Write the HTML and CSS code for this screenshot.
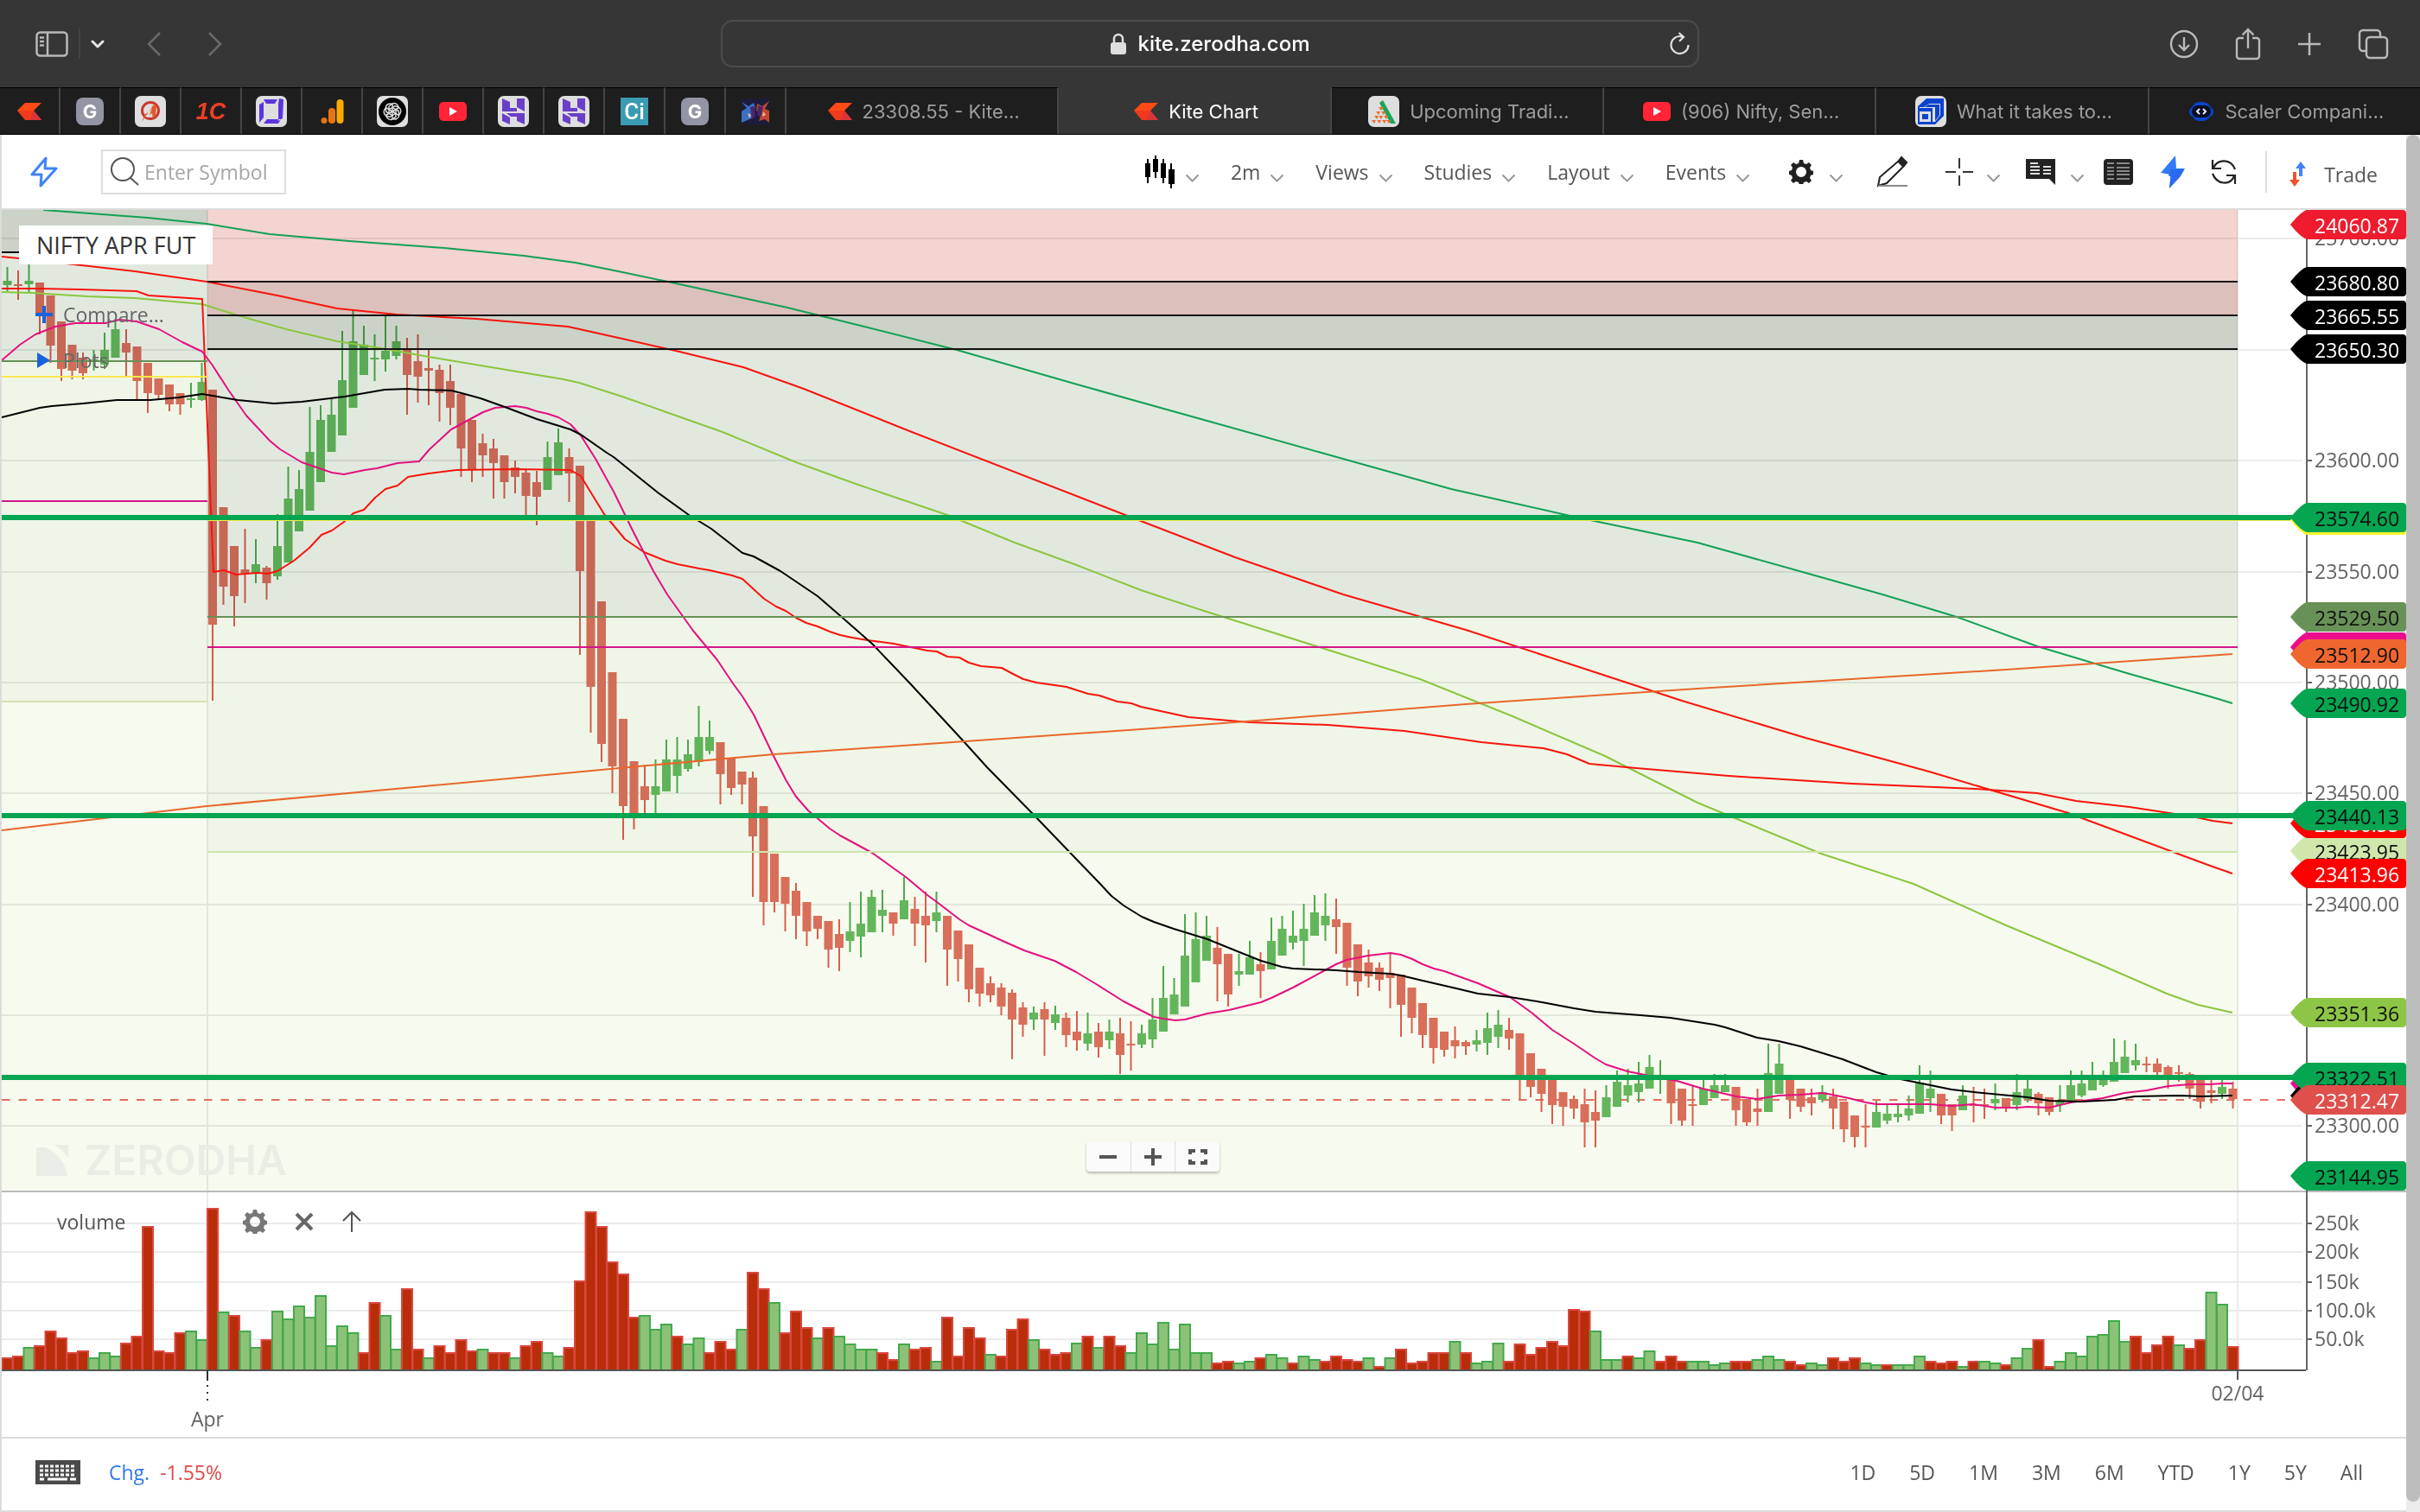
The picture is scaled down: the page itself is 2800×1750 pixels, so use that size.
FILE: index.html
```html
<!DOCTYPE html>
<html lang="en">
<head>
  <meta charset="UTF-8">
  <meta name="viewport" content="width=device-width, initial-scale=1">
  <title>Kite Chart</title>
  <link rel="stylesheet" href="styles.css">
</head>
<body>

<svg class="defs" width="0" height="0" aria-hidden="true">
  <symbol id="chev" viewBox="0 0 17 10"><path d="M1.5 1.5l7 7 7-7" fill="none" stroke="#999" stroke-width="2"/></symbol>
  <symbol id="kite" viewBox="0 0 28 20"><path d="M9 0h19l-9 9H0z" fill="#ff4a16"/><path d="M0 9h19l9 11H9z" fill="#ef3a1c"/><path d="M19 9l9 11H15z" fill="#d8343a"/></symbol>
  <symbol id="yt" viewBox="0 0 32 24"><rect y="1" width="32" height="22" rx="5" fill="#ff2436"/><path d="M12 7l9 5-9 5z" fill="#fff"/></symbol>
  <symbol id="hh" viewBox="0 0 36 36"><rect width="36" height="36" rx="7" fill="#dedede"/><path d="M5 3l9 4v7h8v4H5zM22 3l9 0v15l-9-5zM5 20l9 5v8l-9-4zM10 20h21v13l-9-4v-5h-7z" fill="#6a3fc8"/></symbol>
  <symbol id="gear" viewBox="0 0 28 28"><path fill-rule="evenodd" d="M12 0h4l1 4 3 1 3-2 3 3-2 3 1 3 3 1v4l-3 1-1 3 2 3-3 3-3-2-3 1-1 3h-4l-1-3-3-1-3 2-3-3 2-3-1-3-3-1v-4l3-1 1-3-2-3 3-3 3 2 3-1zM14 8a6 6 0 1 0 0 12 6 6 0 0 0 0-12z"/></symbol>
</svg>

<header class="browser">
  <div class="browser-left">
    <button aria-label="Sidebar"><svg width="38" height="30" viewBox="0 0 38 30" fill="none" stroke="#b9b9b9" stroke-width="2.5"><rect x="1.5" y="1.5" width="35" height="27" rx="4"/><path d="M14 1v28M5 7.500h5M5 12h5M5 16.500h5"/></svg></button>
    <span class="split"></span>
    <button class="drop" aria-label="Tab groups"><svg width="16" height="10" viewBox="0 0 16 10" fill="none" stroke="#e6e6e6" stroke-width="3" stroke-linecap="round" stroke-linejoin="round"><path d="M2 2l6 6 6-6"/></svg></button>
    <button class="back" aria-label="Back"><svg width="18" height="28" viewBox="0 0 18 28" fill="none" stroke="#6a6a6a" stroke-width="2.500"><path d="M15 1L2 14l13 13"/></svg></button>
    <button class="forward" aria-label="Forward"><svg width="18" height="28" viewBox="0 0 18 28" fill="none" stroke="#6a6a6a" stroke-width="2.500"><path d="M2 1l13 13L2 27"/></svg></button>
  </div>
  <div class="address">
    <svg width="20" height="26" viewBox="0 0 20 26"><rect x="1" y="11" width="18" height="14" rx="3" fill="#dedede"/><path d="M5 12V7a5 5 0 0 1 10 0v5" fill="none" stroke="#dedede" stroke-width="2.500"/></svg>
    <span>kite.zerodha.com</span>
    <button class="reload" aria-label="Reload"><svg width="24" height="28" viewBox="0 0 24 28" fill="none" stroke="#e2e2e2" stroke-width="2.200"><path d="M21.500 15a10 10 0 1 1-7-9.500M10.500 1l5.500 4.800-5 5"/></svg></button>
  </div>
  <div class="browser-right">
    <button aria-label="Downloads"><svg width="34" height="34" viewBox="0 0 34 34" fill="none" stroke="#b9b9b9" stroke-width="2.400"><circle cx="17" cy="17" r="15"/><path d="M17 9v15M11 18l6 6 6-6"/></svg></button>
    <button aria-label="Share"><svg width="30" height="38" viewBox="0 0 30 38" fill="none" stroke="#b9b9b9" stroke-width="2.400"><path d="M10 12H5a3 3 0 0 0-3 3v18a3 3 0 0 0 3 3h20a3 3 0 0 0 3-3V15a3 3 0 0 0-3-3h-5M15 24V2M8.500 8.500L15 2l6.500 6.500"/></svg></button>
    <button aria-label="New tab"><svg width="28" height="28" viewBox="0 0 28 28" stroke="#b9b9b9" stroke-width="2.500"><path d="M14 1v26M1 14h26"/></svg></button>
    <button aria-label="Tab overview"><svg width="36" height="36" viewBox="0 0 36 36" fill="none" stroke="#b9b9b9" stroke-width="2.500"><rect x="10" y="10" width="24" height="24" rx="4"/><path d="M10 26H6a4 4 0 0 1-4-4V6a4 4 0 0 1 4-4h16a4 4 0 0 1 4 4v4"/></svg></button>
  </div>
</header>

<nav class="tabs">
  <a class="pin" href="#" aria-label="Kite"><svg width="28" height="20"><use href="#kite"/></svg></a>
  <a class="pin" href="#"><span class="letter">G</span></a>
  <a class="pin" href="#" aria-label="Pinned"><svg width="36" height="36" viewBox="0 0 36 36"><rect width="36" height="36" rx="7" fill="#dedede"/><circle cx="18" cy="17" r="9.500" fill="none" stroke="#c9372c" stroke-width="3"/><path d="M8 30l4-9 4-2 5-8 4-1-1 13-3 4-1-7-5 4-2-1z" fill="#e2572b"/><path d="M12 24l8-10-4 11z" fill="#dedede"/></svg></a>
  <a class="pin" href="#"><span class="one-c">1C</span></a>
  <a class="pin" href="#" aria-label="Pinned"><svg width="36" height="36" viewBox="0 0 36 36"><rect width="36" height="36" rx="7" fill="#dedede"/><path d="M9 4h16l-3 5H12zM27 3l5 1-1 22-5 3V9zM4 10l5-3v18l-5 6zM9 32h17l3-5H13z" fill="#5b35e0"/></svg></a>
  <a class="pin" href="#" aria-label="Analytics"><svg width="28" height="30" viewBox="0 0 28 30"><circle cx="5" cy="25.500" r="3.500" fill="#e87410"/><rect x="10" y="11" width="8" height="18" rx="4" fill="#e87410"/><rect x="19.500" y="1" width="8" height="28" rx="4" fill="#f9ab00"/></svg></a>
  <a class="pin" href="#" aria-label="Pinned"><svg width="36" height="36" viewBox="0 0 36 36"><rect width="36" height="36" rx="7" fill="#dedede"/><circle cx="18" cy="18" r="16" fill="#000"/><g fill="none" stroke="#dedede" stroke-width="1.500"><path id="petal" d="M14 20v-8l4-3a5 5 0 0 1 7 5l-7 4"/><use href="#petal" transform="rotate(60 18 18)"/><use href="#petal" transform="rotate(120 18 18)"/><use href="#petal" transform="rotate(180 18 18)"/><use href="#petal" transform="rotate(240 18 18)"/><use href="#petal" transform="rotate(300 18 18)"/></g></svg></a>
  <a class="pin" href="#" aria-label="YouTube"><svg width="32" height="24"><use href="#yt"/></svg></a>
  <a class="pin" href="#" aria-label="Pinned"><svg width="36" height="36"><use href="#hh"/></svg></a>
  <a class="pin" href="#" aria-label="Pinned"><svg width="36" height="36"><use href="#hh"/></svg></a>
  <a class="pin" href="#"><span class="ci">Ci</span></a>
  <a class="pin" href="#"><span class="letter">G</span></a>
  <a class="pin" href="#" aria-label="Pinned"><svg width="32" height="30" viewBox="0 0 32 30"><rect width="32" height="30" fill="#1d1c3c"/><path d="M0 4l8 5 6-4 2 6-5 4 4 6-6 3-9 4V15l6-4z" fill="#3c6fc4"/><path d="M32 3l-8 6-6-3-1 8 6 3-3 9 7-2 5 4V14l-5-2z" fill="#c2482f"/><path d="M10 10l5-1 1 12-4 3zM19 8l6 2-3 12-4-3z" fill="#482769"/><path d="M7 17l4 2-2 4zM25 15l3 4-4 2z" fill="#f0b9a0"/></svg></a>
  <a class="tab" href="#"><svg width="28" height="20"><use href="#kite"/></svg>23308.55 - Kite…</a>
  <a class="tab active" href="#"><svg width="28" height="20"><use href="#kite"/></svg>Kite Chart</a>
  <a class="tab" href="#"><svg width="36" height="36" viewBox="0 0 36 36"><rect width="36" height="36" rx="7" fill="#dedede"/><path d="M13 8l4-3 15 27h-6z" fill="#18a558"/><path d="M12 13h6l-3 4zM9 18h5l-2 4zM15 18h5l-2 4zM7 23h5l-2 4zM12 23h5l-2 4zM18 23h5l-2 4zM4 28h5l-2 4zM10 28h5l-2 4zM16 28h5l-2 4zM21 28h5l-2 4z" fill="#ef6c2f"/></svg>Upcoming Tradi…</a>
  <a class="tab" href="#"><svg width="32" height="24"><use href="#yt"/></svg>(906) Nifty, Sen…</a>
  <a class="tab" href="#"><svg width="36" height="36" viewBox="0 0 36 36"><rect width="36" height="36" rx="7" fill="#dedede"/><path d="M13 3h20v20L23 33H3V12z" fill="#0b43cf"/><path d="M5 13h5l6-4h13v13l-6 8h-3V14H5z" fill="#dedede"/><path d="M15 10h13v12l-5 7V13H11z" fill="#0b43cf"/><path d="M5 18h13v12H5z" fill="#dedede"/><path d="M8 21h7v6H8z" fill="#0b43cf"/></svg>What it takes to…</a>
  <a class="tab" href="#"><svg width="30" height="24" viewBox="0 0 30 24"><rect x="4" y="1" width="22" height="22" rx="9" fill="#0b43cf"/><rect x="1" y="7" width="28" height="11" rx="5" fill="#0b43cf"/><rect x="4" y="5" width="22" height="14" rx="7" fill="#0a0f22"/><path d="M13 9l-3 3 3 3M17 9l3 3-3 3" fill="none" stroke="#e6ecff" stroke-width="2"/></svg>Scaler Compani…</a>
</nav>

<div class="page">
  <main>
    <div class="toolbar">
      <button class="flash" aria-label="Quick"><svg width="32" height="36" viewBox="0 0 32 36" fill="none" stroke="#3f83f8" stroke-width="3" stroke-linejoin="round"><path d="M18 2L2 21h11l-1 13 18-20H17z"/></svg></button>
      <label class="search">
        <svg width="34" height="34" viewBox="0 0 34 34" fill="none" stroke="#555" stroke-width="2"><circle cx="15" cy="14" r="13"/><path d="M24 24l9 8"/></svg>
        <input type="text" placeholder="Enter Symbol" aria-label="Enter Symbol">
      </label>
      <div class="menus">
        <button class="menu" aria-label="Chart style"><svg width="36" height="38" viewBox="0 0 36 38"><path d="M4 4v28M13 0v26M22 4v28M31 9v29" stroke="#000" stroke-width="2"/><path d="M1 9h6v16H1zM10 4h6v15h-6zM19 9h6v17h-6zM28 16h7v17h-7z"/></svg><svg class="chev"><use href="#chev"/></svg></button>
        <button class="menu">2m<svg class="chev"><use href="#chev"/></svg></button>
        <button class="menu">Views<svg class="chev"><use href="#chev"/></svg></button>
        <button class="menu">Studies<svg class="chev"><use href="#chev"/></svg></button>
        <button class="menu">Layout<svg class="chev"><use href="#chev"/></svg></button>
        <button class="menu">Events<svg class="chev"><use href="#chev"/></svg></button>
        <button class="menu" aria-label="Settings"><svg width="44" height="28" viewBox="-9 0 44 28" fill="#222"><use href="#gear" width="28" height="28"/></svg><svg class="chev"><use href="#chev"/></svg></button>
        <button class="tool draw" aria-label="Draw"><svg width="38" height="38" viewBox="0 0 38 38"><path d="M2 35l2-10L26 6l6 6L12 32zM26 6l3-4 6 6-3 4" fill="none" stroke="#222" stroke-width="2"/><path d="M24 7l5-6 7 7-5 6z" fill="#222"/><path d="M2 35h34" stroke="#888" stroke-width="2"/></svg></button>
        <button class="menu" aria-label="Crosshair"><svg width="40" height="34" viewBox="0 0 40 34" stroke="#333" stroke-width="2"><path d="M20 1v12M20 21v12M4 17h12M24 17h12"/></svg><svg class="chev"><use href="#chev"/></svg></button>
        <button class="menu tight" aria-label="Info"><svg width="40" height="30" viewBox="0 0 40 30"><path d="M0 0h34v30l-7-7H0z" fill="#222"/><path d="M5 5h9M5 9h11M5 13h11M5 17h11M20 9h9M20 13h9M20 17h9" stroke="#ddd" stroke-width="2"/></svg><svg class="chev"><use href="#chev"/></svg></button>
        <button class="tool" aria-label="Table"><svg width="34" height="30" viewBox="0 0 34 30"><rect width="34" height="30" rx="4" fill="#222"/><path d="M4 5h8M15 5h15M4 10h8M15 10h15M4 14h8M15 14h15M4 18h8M15 18h15M4 23h8M15 23h15" stroke="#aaa" stroke-width="1.500"/></svg></button>
        <button class="tool bolt" aria-label="Signals"><svg width="28" height="38" viewBox="0 0 28 38"><path d="M17 0L0 20h10l-1 4h14l5-9H18z" fill="#2f7bf6"/><path d="M0 20h12l-2 18 13-14z" fill="#2f62e8"/><path d="M10 16h17L10 38l2-18z" fill="#2a6af2"/></svg></button>
        <button class="tool refresh" aria-label="Refresh"><svg width="32" height="30" viewBox="0 0 32 30" fill="none" stroke="#222" stroke-width="2.200"><path d="M3 1v10h10M4 10C9 0 24-1 29 12M29 29V19H19M28 20C23 31 8 30 3 17"/></svg></button>
        <button class="trade"><svg width="20" height="30" viewBox="0 0 20 30"><path d="M13 0l6 8h-4v9h-4V8H7z" fill="#3f83f8"/><path d="M6 29l6-8H8v-9H4v9H0z" fill="#f0502e"/></svg>Trade</button>
      </div>
    </div>

    <section class="chart">
      <svg id="chart" viewBox="2 243 2782 1420"></svg>

      <h1 class="symbol">NIFTY APR FUT</h1>
      <button class="compare"><svg width="20" height="20" viewBox="0 0 20 20"><path d="M10 0v20M0 10h20" stroke="#1a63dc" stroke-width="4"/></svg>Compare...</button>
      <button class="plots"><svg width="16" height="18" viewBox="0 0 16 18"><path d="M0 0l15 9-15 9z" fill="#1a63dc"/></svg>Plots</button>

      <div class="watermark"><svg width="38" height="36" viewBox="0 0 38 36"><path d="M0 3h10c14 5 24 18 26 33H0zM20 0h17v16C34 9 28 4 20 0z"/></svg>ZERODHA</div>

      <div class="zoom">
        <button aria-label="Zoom out"><svg width="22" height="22" viewBox="0 0 22 22"><path d="M1 11h20" stroke="#555" stroke-width="4"/></svg></button>
        <button aria-label="Zoom in"><svg width="22" height="22" viewBox="0 0 22 22"><path d="M1 11h20M11 1v20" stroke="#555" stroke-width="4"/></svg></button>
        <button aria-label="Full screen"><svg width="22" height="18" viewBox="0 0 22 18"><path d="M2 6V2h6M14 2h6v4M20 12v4h-6M8 16H2v-4" fill="none" stroke="#555" stroke-width="4"/></svg></button>
      </div>

      <div class="study">
        <span>volume</span>
        <button aria-label="Study settings"><svg width="28" height="28" viewBox="0 0 28 28" fill="#777"><use href="#gear"/></svg></button>
        <button aria-label="Remove study"><svg width="22" height="22" viewBox="0 0 22 22"><path d="M2 2l18 18M20 2L2 20" stroke="#666" stroke-width="4"/></svg></button>
        <button aria-label="Move up"><svg width="24" height="26" viewBox="0 0 24 26"><path d="M12 25V2M2 12L12 2l10 10" fill="none" stroke="#555" stroke-width="2"/></svg></button>
      </div>
    </section>

    <footer class="foot">
      <button aria-label="Shortcuts"><svg width="52" height="28" viewBox="0 0 52 28"><rect width="52" height="28" fill="#4a4a4a"/><path d="M5 7h42M5 12h42M5 17h42" stroke="#fff" stroke-width="3" stroke-dasharray="4 2"/><path d="M5 22h5M14 22h23M40 22h7" stroke="#fff" stroke-width="3"/></svg></button>
      <span class="chg">Chg.</span>
      <span class="loss">-1.55%</span>
      <div class="ranges">
        <button>1D</button>
        <button>5D</button>
        <button>1M</button>
        <button>3M</button>
        <button>6M</button>
        <button>YTD</button>
        <button>1Y</button>
        <button>5Y</button>
        <button>All</button>
      </div>
    </footer>
  </main>
  <div class="scrollbar"><div class="thumb"></div></div>
</div>

<script src="chart.js"></script>
</body>
</html>
```
FILE: styles.css
```css
* {
  box-sizing: border-box;
}
body {
  margin: 0;
  min-height: 100vh;
  display: flex;
  flex-direction: column;
  background: #fff;
  color: #555;
  font-family: "Open Sans", sans-serif;
  font-size: 23px;
}
button {
  padding: 0;
  border: none;
  background: none;
  color: inherit;
  font: inherit;
  cursor: pointer;
}
svg {
  display: block;
  flex-shrink: 0;
}
.defs {
  position: absolute;
}

/* browser bar */
.browser {
  display: grid;
  grid-template-columns: 1fr auto 1fr;
  align-items: center;
  height: 101px;
  background: #363636;
}
.browser-left, .browser-right {
  display: flex;
  align-items: center;
}
.browser-left {
  padding-left: 41px;
}
.browser-right {
  justify-content: flex-end;
  gap: 42px;
  padding-right: 36px;
}
.split {
  width: 2px;
  height: 35px;
  margin-left: 12px;
  background: #444;
}
.drop {
  margin-left: 12px;
}
.back {
  margin-left: 49px;
}
.forward {
  margin-left: 52px;
}
.address {
  display: flex;
  align-items: center;
  justify-content: center;
  gap: 12px;
  position: relative;
  width: 1132px;
  max-width: 41vw;
  height: 55px;
  border: 2px solid #4c4c4c;
  border-radius: 14px;
  color: #fff;
  font-family: Inter, sans-serif;
  font-size: 24px;
  font-weight: 500;
}
.reload {
  position: absolute;
  right: 8px;
  top: 12px;
}

/* tabs */
.tabs {
  display: flex;
  height: 55px;
  border-bottom: 1px solid #000;
  background: #1e1e1e;
  font-family: Inter, sans-serif;
  font-size: 22px;
}
.tabs a {
  display: flex;
  align-items: center;
  justify-content: center;
  border-top: 1px solid #000;
  border-right: 2px solid #454545;
  color: #9d9d9d;
  text-decoration: none;
  white-space: nowrap;
}
.pin {
  width: 70px;
}
.tab {
  flex: 1;
  gap: 12px;
  padding-left: 4px;
}
.tabs .tab:last-child {
  border-right: none;
}
.tabs .active {
  border-top-color: #363636;
  background: #363636;
  color: #fff;
}
.letter {
  width: 32px;
  border-radius: 8px;
  background: #9395a5;
  color: #fff;
  font-size: 22px;
  font-weight: 700;
  line-height: 32px;
  text-align: center;
}
.one-c {
  color: #ee3f24;
  font-family: "Liberation Sans", sans-serif;
  font-size: 27px;
  font-weight: 700;
  font-style: italic;
  line-height: 32px;
}
.ci {
  width: 32px;
  background: #3a9bb2;
  color: #fff;
  font-family: Roboto, sans-serif;
  font-size: 26px;
  font-weight: 500;
  line-height: 32px;
  text-align: center;
}

/* toolbar */
.page {
  display: flex;
  flex: 1;
}
main {
  flex: 1;
  min-width: 0;
  border-left: 2px solid #dcdcdc;
}
.toolbar {
  display: flex;
  align-items: center;
  height: 87px;
  padding-left: 33px;
  border-bottom: 2px solid #dcdcdc;
}
.search {
  display: flex;
  align-items: center;
  width: 214px;
  height: 52px;
  margin-left: 50px;
  padding-left: 8px;
  border: 2px solid #dedede;
}
.search input {
  width: 160px;
  margin-left: 6px;
  padding: 0;
  border: none;
  outline: none;
  font: inherit;
}
.search input::placeholder {
  color: #a6a6a6;
}
.menus {
  display: flex;
  align-items: center;
  margin-left: auto;
}
.menu {
  display: flex;
  align-items: center;
  gap: 11px;
  padding: 0 18px;
}
.tight {
  padding: 0 11px;
}
.chev {
  width: 17px;
  height: 10px;
  margin-top: 14px;
}
.tool {
  display: flex;
  justify-content: center;
  width: 56px;
}
.draw {
  width: 78px;
}
.bolt {
  width: 69px;
}
.refresh {
  width: 49px;
}
.trade {
  display: flex;
  align-items: center;
  gap: 20px;
  height: 48px;
  margin-left: 24px;
  padding: 6px 33px 0 26px;
  border-left: 2px solid #ddd;
}

/* chart */
.chart {
  position: relative;
  border-bottom: 2px solid #dcdcdc;
}
#chart {
  width: 100%;
  height: auto;
}
#chart text {
  fill: #636363;
}
#chart .on-dark {
  fill: #fff;
}
#chart .on-light {
  fill: #111;
}
.bands rect {
  mix-blend-mode: multiply;
}
.curves path {
  fill: none;
  stroke-width: 2;
  stroke-linejoin: round;
}
.symbol {
  position: absolute;
  left: 20px;
  top: 18px;
  margin: 0;
  padding: 0 20px;
  background: #fff;
  color: #333;
  font-size: 27px;
  font-weight: 400;
  line-height: 45px;
}
.compare, .plots {
  display: flex;
  align-items: center;
  position: absolute;
  left: 39px;
  color: #666;
}
.compare {
  top: 105px;
  gap: 12px;
}
.plots {
  top: 158px;
  gap: 14px;
  padding-left: 2px;
}
.watermark {
  display: flex;
  align-items: center;
  gap: 18px;
  position: absolute;
  left: 40px;
  bottom: 292px;
  color: #eaede5;
  fill: #eaede5;
  font-family: Inter, sans-serif;
  font-size: 48px;
  font-weight: 600;
  line-height: 56px;
}
.zoom {
  display: flex;
  position: absolute;
  left: 0;
  right: 118px;
  bottom: 307px;
  width: 154px;
  margin: 0 auto;
  border-radius: 4px;
  background: #fafafa;
  box-shadow: 0 2px 3px rgba(0, 0, 0, 0.25);
}
.zoom button {
  display: flex;
  flex: 1;
  align-items: center;
  justify-content: center;
  height: 35px;
}
.zoom button + button {
  border-left: 1px solid #ddd;
}
.study {
  display: flex;
  align-items: center;
  position: absolute;
  left: 64px;
  bottom: 233px;
  gap: 32px;
}
.study span {
  margin-right: 104px;
}

/* footer */
.foot {
  display: flex;
  align-items: center;
  height: 85px;
  padding: 0 50px 6px 39px;
  border-bottom: 2px solid #dcdcdc;
}
.chg {
  margin-left: 33px;
  color: #2f7ae5;
}
.loss {
  margin-left: 12px;
  color: #e04848;
}
.ranges {
  display: flex;
  gap: 39px;
  margin-left: auto;
}
.scrollbar {
  width: 16px;
  padding-bottom: 12px;
  background: #ececec;
}
.thumb {
  height: 100%;
  border-radius: 8px;
  background: #bdbdbd;
}
```
FILE: chart.js
```js
const svg = document.getElementById("chart");

const RED = "#e07160";
const GREEN = "#66ba62";
const STEP = 12.5;
const OPEN_X = 246;   // first candle of the session
const BEFORE = 19;    // candles left over from the previous session

// colour + high, body top, body bottom, low
const candles = `
g309,325,330,337 r313,329,331,347 g301,325,329,338 r327,327,362,387 r342,342,400,420
r372,372,427,441 r399,399,429,439 r408,414,432,439 g405,416,418,429 g385,405,422,427
g371,381,414,414 r381,397,408,435 r401,401,441,464 r420,420,455,478 r438,438,457,462
r445,445,468,476 r455,455,468,480 g443,461,463,472 g420,442,463,464
r451,451,723,811 r587,587,679,700 r632,632,690,725 r612,659,664,698 g624,653,663,675
r655,657,675,694 g595,632,667,671 g540,577,651,651 g544,566,615,615 g471,523,591,591
g469,486,558,558 g462,480,523,523 g383,440,504,504 g358,395,472,472 g377,399,434,434
g387,414,416,441 g366,406,416,430 g377,395,412,416 r391,404,434,480 r387,418,436,466
r404,426,429,469 r422,428,455,488 r422,441,472,492 r456,456,519,552 r486,486,543,558
r502,513,527,552 r508,519,536,577 r527,527,558,577 r533,541,552,571 r544,547,574,598
r545,558,575,608 g511,529,567,567 g496,512,550,550 r519,529,548,581 r539,539,661,758
r600,600,795,848 r696,696,861,882 r778,778,887,918 r832,832,933,972 r881,881,943,960
r885,910,926,943 g879,910,920,943 g856,879,916,916 g853,879,898,918 g856,873,890,893
g817,853,882,887 g834,853,869,873 r859,859,896,931 r877,877,912,920 r893,893,908,931
r893,900,968,1038 r933,933,1044,1071 r988,988,1044,1056 r1015,1015,1046,1078 r1022,1031,1060,1087
r1044,1044,1078,1095 r1060,1060,1075,1087 r1066,1066,1099,1120 r1064,1081,1097,1124 g1044,1078,1089,1102
g1032,1069,1084,1108 g1030,1038,1079,1079 g1030,1053,1060,1079 r1056,1056,1069,1083 g1015,1042,1064,1064
r1038,1052,1069,1095 r1032,1060,1071,1114 g1032,1056,1066,1079 r1060,1060,1099,1141 r1077,1077,1110,1136
r1093,1093,1145,1160 r1120,1120,1150,1165 r1130,1138,1152,1160 r1138,1143,1165,1175 r1145,1149,1180,1226
r1160,1166,1186,1200 g1165,1172,1180,1192 r1160,1168,1180,1222 g1164,1174,1184,1192 r1172,1178,1198,1212
r1170,1194,1204,1216 g1172,1196,1208,1216 r1184,1194,1212,1224 g1180,1194,1204,1214 r1178,1196,1221,1243
r1182,1208,1210,1239 g1186,1196,1209,1213 g1155,1180,1203,1213 g1118,1155,1194,1194 g1132,1151,1174,1174
g1058,1106,1165,1165 g1056,1087,1137,1137 g1060,1083,1112,1112 r1073,1097,1116,1159 r1104,1104,1151,1165
g1104,1124,1128,1141 g1089,1108,1128,1128 r1102,1116,1124,1155 g1062,1089,1122,1122 g1060,1075,1106,1106
g1054,1083,1091,1099 g1046,1075,1089,1118 g1036,1056,1083,1083 g1034,1060,1071,1089 r1040,1064,1073,1104
r1068,1068,1120,1141 r1093,1093,1136,1153 r1099,1114,1130,1143 r1114,1120,1134,1147 r1102,1126,1132,1167
r1128,1128,1163,1200 r1143,1143,1178,1196 r1161,1161,1198,1213 r1178,1178,1213,1231 r1194,1194,1215,1223
r1188,1204,1211,1225 r1204,1206,1211,1221 g1192,1204,1209,1217 g1172,1190,1207,1221 g1169,1186,1200,1213
r1178,1192,1202,1215 r1196,1196,1247,1273 r1219,1219,1258,1270 r1237,1237,1266,1287 r1250,1250,1279,1301
r1264,1264,1281,1303 r1268,1272,1283,1295 r1260,1278,1299,1328 r1262,1287,1297,1328 g1256,1270,1293,1293
g1239,1252,1281,1281 g1237,1256,1268,1276 g1229,1254,1264,1276 g1221,1235,1260,1260 g1227,1245,1248,1266
r1246,1246,1277,1301 r1260,1260,1297,1303 r1257,1278,1280,1303 g1249,1260,1279,1279 g1243,1256,1271,1271
g1243,1256,1264,1264 r1258,1258,1285,1303 r1272,1272,1299,1303 r1260,1283,1287,1303 g1208,1242,1287,1287
g1208,1231,1266,1266 r1249,1249,1273,1295 r1260,1260,1281,1287 r1260,1270,1277,1291 g1256,1264,1273,1276
r1260,1269,1283,1307 r1275,1275,1307,1322 r1291,1291,1316,1328 r1278,1303,1305,1328 g1274,1287,1305,1305
g1279,1289,1297,1301 g1279,1289,1293,1299 g1268,1283,1291,1297 g1233,1253,1289,1289 g1239,1260,1271,1287
r1266,1266,1291,1301 r1278,1278,1291,1309 g1256,1268,1285,1285 r1258,1278,1280,1299 r1260,1278,1280,1295
g1254,1272,1277,1285 r1271,1271,1283,1287 g1243,1264,1279,1285 g1250,1260,1272,1276 r1264,1266,1277,1291
r1270,1270,1287,1291 g1256,1275,1279,1287 g1239,1256,1274,1274 g1239,1254,1268,1270 g1229,1249,1262,1262
g1239,1247,1256,1258 g1202,1229,1252,1252 g1204,1223,1242,1242 g1208,1227,1233,1239 r1223,1231,1233,1241
r1225,1231,1241,1245 r1233,1235,1245,1260 r1233,1241,1243,1252 r1241,1243,1260,1272 r1250,1250,1275,1283
r1249,1262,1265,1277 g1245,1258,1266,1272 r1252,1260,1272,1283`.trim().split(/\s+/);

// colour + bar height
const volume = `
r14 r16 g26 r28 r45 r37 r20 r22 g14 g20 g16 r31 r39 r166 r22 r20 r43 g45 g35
r187 g67 r63 g45 g26 r35 g68 g59 g74 g61 g86 g28 g51 g43 r20 r78 g63 g24 r94 r24
g14 r28 r20 r35 r22 g24 r20 r20 g14 r28 r33 g20 g16 r26 r103 r183 r166 r125 r111 r61
g63 g47 g53 r39 g30 g37 r20 r33 r24 g47 r113 r94 g78 r43 r68 r49 g37 r49 g39 g30
g24 g24 r20 r12 g30 r24 r26 g10 r61 r16 r49 r37 g18 r16 r47 r59 g35 r24 r18 r20
g31 r39 g26 r39 r28 g20 g43 g30 g55 g24 g53 g20 g20 r8 r10 g8 g10 r14 g18 g14
r8 g16 g12 r10 r16 r12 r10 g14 r4 g14 r24 r8 r10 r20 r20 g33 r20 g8 g10 g31
r10 r30 r18 r26 r33 r28 r70 r68 g45 g12 g12 r16 g14 g22 r10 r16 r10 g10 g10 g6
g8 r10 r10 g12 g16 g12 r10 r6 g8 g6 r14 r10 r14 g8 g6 r6 g6 g6 g16 r10
r8 r10 g4 r10 g10 g8 r6 g14 g25 r35 r4 g10 g20 g16 g39 g41 g57 g33 r39 r20
r29 r39 g29 r25 r35 g90 g76 r27`.trim().split(/\s+/);

const curves = [
  ["#14a055", "50,243 171,252 239,259 312,271 404,279 514,287 606,296 666,304 720,315 768,325 911,356 1000,378 1107,405 1250,446 1393,486 1536,526 1679,566 1821,598 1964,628 2089,663 2178,688 2264,714 2357,748 2464,780 2560,807 2583,814"],
  ["#8bc63f", "2,338 37,339 101,343 156,345 234,352 275,365 331,381 390,395 441,403 496,413 574,426 652,439 670,443 720,459 836,500 921,535 990,560 1096,596 1174,628 1243,653 1320,683 1393,707 1536,752 1643,786 1750,829 1857,875 1964,929 2107,988 2214,1023 2321,1071 2429,1116 2507,1150 2543,1163 2583,1172"],
  ["#f8140c", "2,297 22,299 94,307 156,314 239,326 321,342 390,357 459,364 551,369 657,378 720,392 786,407 860,425 930,450 1055,500 1320,603 1429,645 1554,688 1696,729 1821,770 1946,811 2089,854 2232,893 2393,941 2560,1003 2583,1011"],
  ["#f8140c", "2,334 46,334 92,335 158,337 172,342 234,346 247,662 259,660 273,665 298,663 310,664 321,661 340,649 358,634 372,619 384,614 398,604 409,594 421,590 434,576 446,566 460,562 472,552 496,548 528,544 597,543 660,544 672,551 699,595 723,624 745,639 770,649 784,653 809,658 821,660 847,666 859,670 872,682 884,693 898,702 909,707 921,715 933,721 946,725 960,731 972,735 986,738 1004,741 1034,745 1073,753 1084,754 1096,760 1110,761 1121,767 1135,771 1159,773 1172,780 1184,786 1199,790 1234,795 1259,803 1272,805 1293,812 1309,814 1320,818 1375,830 1446,836 1536,839 1625,846 1714,859 1786,866 1813,873 1839,884 1893,889 2000,898 2143,907 2286,913 2357,918 2402,927 2464,934 2536,945 2560,950 2583,953"],
  ["#e4107f", "2,417 23,399 41,387 64,378 87,374 122,374 138,370 158,372 184,381 211,396 234,407 246,423 264,451 285,481 312,510 324,520 349,535 384,547 398,549 422,544 436,542 460,536 485,534 497,520 522,497 546,484 559,477 573,472 596,470 609,472 621,476 634,479 646,483 660,491 672,504 689,531 710,569 731,612 756,661 772,688 802,730 830,764 848,791 859,806 872,827 894,873 910,904 921,922 935,938 960,959 972,967 1009,987 1034,1005 1048,1015 1073,1036 1084,1044 1110,1064 1121,1071 1160,1089 1185,1100 1220,1112 1245,1125 1270,1140 1300,1159 1335,1177 1346,1179 1360,1181 1371,1180 1397,1173 1422,1169 1459,1160 1471,1155 1496,1143 1533,1123 1546,1116 1558,1111 1583,1106 1609,1103 1621,1105 1634,1110 1646,1116 1659,1121 1671,1124 1696,1133 1710,1138 1733,1148 1747,1154 1772,1172 1796,1192 1821,1208 1846,1225 1858,1232 1883,1240 1903,1244 1940,1251 1970,1260 2009,1269 2033,1272 2058,1268 2083,1267 2108,1265 2120,1267 2139,1271 2159,1276 2171,1278 2233,1278 2258,1280 2283,1278 2309,1282 2334,1282 2346,1281 2371,1282 2396,1276 2433,1271 2458,1265 2484,1262 2509,1257 2534,1255 2557,1255 2571,1254 2583,1254"],
  ["#000", "2,483 46,472 60,470 96,467 135,463 174,463 207,460 234,456 275,463 317,467 349,465 399,459 445,451 472,450 485,451 522,452 534,455 556,461 584,471 621,485 660,497 672,503 702,524 710,529 761,570 797,596 823,612 859,640 872,644 903,661 946,690 976,716 1009,745 1052,790 1114,857 1142,888 1195,942 1245,994 1272,1022 1286,1037 1300,1048 1321,1061 1335,1067 1358,1075 1397,1087 1434,1102 1459,1112 1483,1119 1496,1121 1546,1123 1572,1125 1609,1127 1621,1129 1646,1135 1685,1144 1710,1150 1747,1154 1784,1160 1821,1167 1846,1171 1898,1175 1933,1178 1984,1186 1996,1189 2033,1201 2058,1205 2083,1211 2132,1226 2171,1241 2199,1249 2258,1261 2284,1264 2346,1270 2371,1274 2408,1275 2447,1273 2470,1269 2521,1268 2546,1269 2583,1268"],
  ["#e8672c", "2,961 239,933 600,900 738,887 896,873 1059,862 1320,844 1429,836 1696,815 1964,797 2321,775 2583,757"]
];

// x, y, width, height, colour
const bands = [
  [2, 243, 238, 49, "#cbd3c8"], [2, 292, 238, 126, "#e1e9df"],
  [2, 418, 238, 394, "#eff6e7"], [2, 812, 238, 566, "#f7faee"],
  [240, 243, 2349, 82, "#f3d4d0"], [240, 325, 2349, 40, "#dcc0bb"],
  [240, 365, 2349, 39, "#cbd3c8"], [240, 404, 2349, 310, "#e1e9df"],
  [240, 714, 2349, 272, "#eff6e7"], [240, 986, 2349, 392, "#f7faee"]
];

// x1, x2, y, colour, width
const levels = [
  [2, 240, 292, "#000", 2], [2, 240, 418, "#689157", 2], [2, 240, 436, "#fbe64d", 2],
  [2, 240, 580, "#d4148a", 2], [2, 240, 812, "#cfe4ac", 2],
  [240, 2589, 326, "#111", 2], [240, 2589, 365, "#111", 2], [240, 2589, 404, "#111", 2],
  [240, 2589, 714, "#689157", 2], [240, 2589, 749, "#d4148a", 2], [240, 2589, 986, "#cfe4ac", 2],
  [240, 2650, 602, "#f2ec4a", 2],
  [0, 2660, 599, "#05a551", 6], [0, 2660, 944, "#05a551", 6], [0, 2660, 1247, "#05a551", 6]
];

const prices = [
  [276, "23700.00"], [405, ""], [533, "23600.00"], [662, "23550.00"], [790, "23500.00"],
  [918, "23450.00"], [1047, "23400.00"], [1175, ""], [1303, "23300.00"]
];
const volumes = [[1416, "250k"], [1449, "200k"], [1484, "150k"], [1517, "100.0k"], [1550, "50.0k"]];

// y, text, tag colour, text class
const tags = [
  [260, "24060.87", "#ee1c2e", "on-dark"], [326, "23680.80", "#000", "on-dark"],
  [365, "23665.55", "#000", "on-dark"], [404, "23650.30", "#000", "on-dark"],
  [602, "", "#f8f32b", ""], [599, "23574.60", "#05a551", "on-light"],
  [714, "23529.50", "#689157", "on-light"], [749, "", "#ec0b8d", ""],
  [757, "23512.90", "#ef662f", "on-light"], [814, "23490.92", "#05a551", "on-light"],
  [985, "23423.95", "#d0e7ab", "on-light"], [953, "23436.55", "#ff0000", "on-dark"],
  [944, "23440.13", "#05a551", "on-light"], [1011, "23413.96", "#ff0000", "on-dark"],
  [1172, "23351.36", "#8dc646", "on-light"], [1254, "", "#ec0b8d", ""], [1268, "", "#000", ""],
  [1247, "23322.51", "#05a551", "on-light"], [1273, "23312.47", "#df504c", "on-dark"],
  [1361, "23144.95", "#05a551", "on-light"]
];

function rect(x, y, w, h, fill, extra = "") {
  return `<rect x="${x}" y="${y}" width="${w}" height="${h}" fill="${fill}" ${extra}/>`;
}
function hline(x1, x2, y, color, width, extra = "") {
  return `<path d="M${x1} ${y}H${x2}" stroke="${color}" stroke-width="${width}" ${extra}/>`;
}
function vline(x, y1, y2, color, width, extra = "") {
  return `<path d="M${x} ${y1}V${y2}" stroke="${color}" stroke-width="${width}" ${extra}/>`;
}

let out = "";

// grid
[...prices, ...volumes].forEach(([y]) => out += hline(2, 2664, y, "#ebebeb", 2));
out += vline(240, 243, 1586, "#ebebeb", 2) + vline(2589, 243, 1586, "#ebebeb", 2);

out += hline(2, 2655, 1273, "#e8716a", 2, 'stroke-dasharray="9.500 10"');

candles.forEach((c, i) => {
  const x = OPEN_X + (i - BEFORE) * STEP;
  const color = c[0] === "r" ? RED : GREEN;
  const [high, top, bottom, low] = c.slice(1).split(",").map(Number);
  out += vline(x, high, low, c[0] === "r" ? "#e06050" : "#4fae50", 2);
  out += rect(x - 5, top, 10, bottom - top, color);
});

out += '<g class="bands">' + bands.map(b => rect(...b)).join("") + "</g>";
out += '<g class="curves">' + curves.map(([color, pts]) =>
  `<path d="M${pts.replace(/ /g, "L")}" stroke="${color}"/>`).join("") + "</g>";
out += levels.map(([x1, x2, y, color, w]) => hline(x1, x2, y, color, w)).join("");

// volume panel
out += hline(0, 2784, 1379, "#bbb", 2);
volume.forEach((v, i) => {
  const x = OPEN_X - 7 + (i - BEFORE) * STEP;
  const h = Number(v.slice(1));
  const up = v[0] === "g";
  out += rect(x + 1, 1586 - h, STEP - 0.5, h, up ? "#8cc278" : "#b92d0b", `stroke="${up ? "#43a94c" : "#d9483f"}" stroke-width="2"`);
});

// axes
out += hline(0, 2668, 1586, "#555", 2) + vline(2669, 243, 1586, "#666", 2);
out += vline(240, 1586, 1598, "#333", 2) + vline(240, 1603, 1624, "#333", 2, 'stroke-dasharray="2 6"');
out += vline(2589, 1586, 1597, "#555", 2);
[...prices, ...volumes].forEach(([y, label]) => {
  if (label) out += hline(2669, 2675, y, "#666", 2) + `<text x="2678" y="${y + 8}">${label}</text>`;
});
out += '<text x="240" y="1651" text-anchor="middle">Apr</text>';
out += '<text x="2589" y="1621" text-anchor="middle">02/04</text>';

tags.forEach(([y, label, color, cls]) => {
  out += `<path d="M2650 ${y}Q2662 ${y - 15} 2669 ${y - 17}H2780q4 0 4 4v26q0 4-4 4H2669Q2662 ${y + 15} 2650 ${y}z" fill="${color}"/>`;
  if (label) out += `<text class="${cls}" x="2678" y="${y + 10}">${label}</text>`;
});

svg.innerHTML = out;
```
